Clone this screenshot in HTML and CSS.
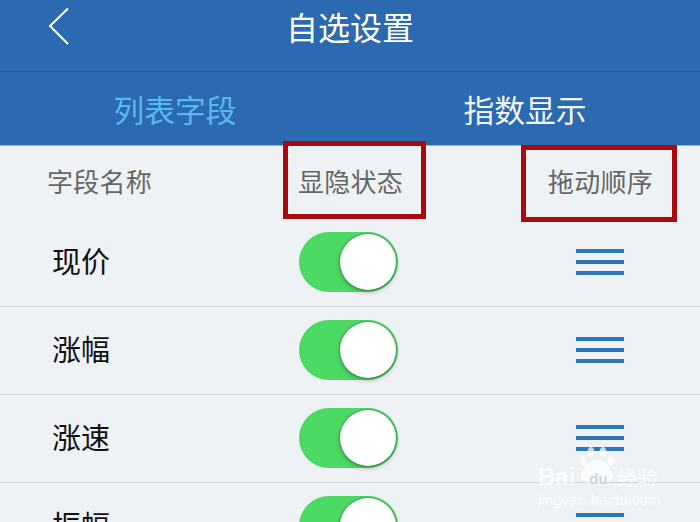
FILE: index.html
```html
<!DOCTYPE html>
<html lang="zh-CN">
<head>
    <meta charset="UTF-8">
    <meta name="viewport" content="width=device-width, initial-scale=1.0">
    <title>自选设置</title>
    <link rel="stylesheet" href="styles.css">
</head>
<body>
    <div class="screen">
        <div class="nav-bar">
            <svg class="back-icon" width="24" height="40" viewBox="0 0 24 40">
                <path d="M21 2.5 L3 20 L21 38" fill="none" stroke="#fff" stroke-width="2"/>
            </svg>
            <h1>自选设置</h1>
        </div>

        <div class="tabs">
            <div class="tab active">列表字段</div>
            <div class="tab">指数显示</div>
        </div>

        <div class="list-head">
            <div class="col-name">字段名称</div>
            <div class="col-state">显隐状态</div>
            <div class="col-drag">拖动顺序</div>
        </div>

        <div class="row">
            <div class="col-name">现价</div>
            <div class="col-state"><div class="toggle"><span class="knob"></span></div></div>
            <div class="col-drag"><div class="drag-icon"><span></span><span></span><span></span></div></div>
        </div>
        <div class="row">
            <div class="col-name">涨幅</div>
            <div class="col-state"><div class="toggle"><span class="knob"></span></div></div>
            <div class="col-drag"><div class="drag-icon"><span></span><span></span><span></span></div></div>
        </div>
        <div class="row">
            <div class="col-name">涨速</div>
            <div class="col-state"><div class="toggle"><span class="knob"></span></div></div>
            <div class="col-drag"><div class="drag-icon"><span></span><span></span><span></span></div></div>
        </div>
        <div class="row">
            <div class="col-name">振幅</div>
            <div class="col-state"><div class="toggle"><span class="knob"></span></div></div>
            <div class="col-drag"><div class="drag-icon"><span></span><span></span><span></span></div></div>
        </div>

        <!-- annotation boxes drawn over the screenshot -->
        <div class="mark mark-state"></div>
        <div class="mark mark-drag"></div>

        <div class="watermark">
            <svg class="paw" width="40" height="40" viewBox="0 0 40 40">
                <ellipse cx="11" cy="6" rx="3.5" ry="5" fill="#fff"/>
                <ellipse cx="23" cy="6" rx="3.5" ry="5" fill="#fff"/>
                <ellipse cx="3.5" cy="15" rx="3.5" ry="4.5" fill="#fff"/>
                <ellipse cx="31" cy="15" rx="3.5" ry="4.5" fill="#fff"/>
                <path d="M17 14 C10 14 2 21 1 29 C0 36 8 38 17 37 C26 38 34 36 33 29 C32 21 24 14 17 14 Z" fill="#fff"/>
            </svg>
            <div class="wm-line"><span class="wm-bai">Bai</span><span class="wm-du">du</span><span class="wm-cn">经验</span></div>
            <div class="wm-url">jingyan.baidu.com</div>
        </div>
    </div>
</body>
</html>
```

FILE: styles.css
```css
body {
    margin: 0;
    font-family: "Noto Sans CJK SC", "Liberation Sans", sans-serif;
}

.screen {
    position: relative;
    width: 700px;
    height: 522px;
    overflow: hidden;
    background-color: #eef2f5;
}

.nav-bar {
    position: relative;
    height: 71px;
    background-color: #2b69b0;
    border-bottom: 1px solid #1f5a98;
    display: flex;
    justify-content: center;
}

.nav-bar h1 {
    margin: 0;
    color: #fff;
    font-size: 32px;
    font-weight: 400;
    line-height: 53px;
}

.back-icon {
    position: absolute;
    left: 47px;
    top: 6px;
}

.tabs {
    height: 74px;
    background-color: #2b69b0;
    border-bottom: 1px solid #8db6d8;
    box-sizing: border-box;
    display: flex;
}

.tab {
    width: 350px;
    text-align: center;
    color: #f2f6fa;
    font-size: 30.75px;
    font-weight: 400;
    line-height: 74px;
}

.tab.active {
    color: #57b8ee;
}

.list-head {
    height: 73px;
    padding-bottom: 4px;
    box-sizing: border-box;
    display: flex;
    align-items: center;
    color: #666;
    font-size: 26px;
    letter-spacing: 0.25px;
}

.list-head .col-name {
    padding-left: 47px;
}

.col-name {
    width: 298px;
    box-sizing: border-box;
    padding-left: 52px;
}

.col-state {
    width: 250px;
}

.col-drag {
    flex: 1;
}

.row {
    height: 88px;
    padding-bottom: 1px;
    box-sizing: border-box;
    border-bottom: 1px solid #cfd3d6;
    display: flex;
    align-items: center;
    color: #111;
    font-size: 29px;
}

.row .col-name {
    padding-bottom: 4px;
}

.toggle {
    position: relative;
    width: 99px;
    height: 60px;
    margin-left: 1px;
    border-radius: 30px;
    background-color: #4cd964;
}

.knob {
    position: absolute;
    right: 2px;
    top: 2px;
    width: 56px;
    height: 56px;
    border-radius: 50%;
    background-color: #fff;
    box-shadow: 0 2px 5px rgba(0, 0, 0, 0.3), 0 0 2px rgba(0, 60, 20, 0.5);
}

.col-drag .drag-icon {
    width: 48px;
    margin-left: 28px;
}

.drag-icon span {
    display: block;
    height: 4px;
    margin-bottom: 7px;
    background-color: #2b77b8;
}

.drag-icon span:last-child {
    margin-bottom: 0;
}

.mark {
    position: absolute;
    box-sizing: border-box;
    border: 5px solid #a80a0f;
}

.mark-state {
    left: 283px;
    top: 141px;
    width: 143px;
    height: 78px;
}

.mark-drag {
    left: 521px;
    top: 145px;
    width: 156px;
    height: 77px;
}

.watermark {
    position: absolute;
    left: 538px;
    top: 446px;
    width: 125px;
    color: #fff;
    opacity: 0.72;
}

.paw {
    position: absolute;
    left: 42px;
    top: 0;
}

.wm-line {
    position: relative;
    display: flex;
    align-items: center;
    margin-top: 19px;
    height: 24px;
    white-space: nowrap;
    font-family: "Liberation Sans", sans-serif;
    font-weight: 700;
    font-size: 24px;
}

.wm-bai {
    width: 42px;
}

.wm-du {
    width: 37px;
    padding-top: 3px;
    text-align: center;
    font-size: 15px;
    color: #c3ccd4;
}

.wm-cn {
    font-family: "Noto Sans CJK SC", sans-serif;
    font-size: 20.5px;
    font-weight: 400;
}

.wm-url {
    margin-top: 2px;
    font-family: "Liberation Sans", sans-serif;
    font-size: 15px;
    letter-spacing: 0.1px;
    white-space: nowrap;
}
```
